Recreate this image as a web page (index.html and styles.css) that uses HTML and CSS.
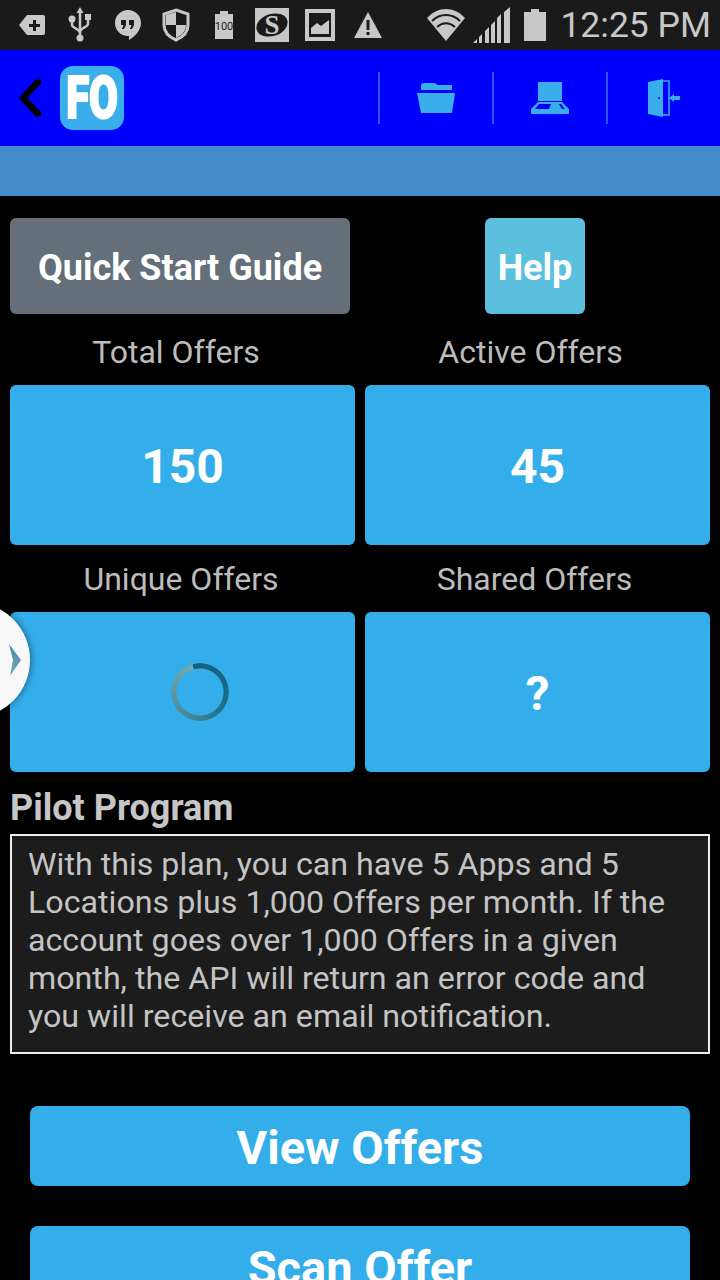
FILE: index.html
```html
<!DOCTYPE html>
<html lang="en">
<head>
    <meta charset="UTF-8">
    <title>Offers Dashboard</title>
    <link rel="stylesheet" href="styles.css">
</head>
<body>

<div class="status-bar">
    <div class="status-icons">
        <div class="slot"><svg width="26" height="22" viewBox="0 0 26 22"><path d="M8 1h16a2 2 0 0 1 2 2v16a2 2 0 0 1-2 2H8L0 11z" fill="#c8c8c8"/><path d="M10 10h4V6h3v4h4v3h-4v4h-3v-4h-4z" fill="#1a1a1a"/></svg></div>
        <div class="slot"><svg width="24" height="36" viewBox="0 0 24 36"><g fill="none" stroke="#c8c8c8" stroke-width="2.500"><path d="M12 4v26"/><path d="M4 13v5c0 3 8 4 8 8"/><path d="M20 11v6c0 3-8 4-8 8"/></g><path d="M12 0l3.500 6h-7z" fill="#c8c8c8"/><circle cx="4" cy="12" r="3.500" fill="#c8c8c8"/><rect x="17" y="7" width="6" height="6" fill="#c8c8c8"/><circle cx="12" cy="31" r="3.500" fill="#c8c8c8"/></svg></div>
        <div class="slot"><svg width="28" height="32" viewBox="0 0 28 32"><path d="M14 1a13 13 0 0 1 13 13c0 8-7 14-12 17v-4h-1A13 13 0 0 1 14 1z" fill="#c8c8c8"/><path d="M7 11h5v5l-2 4H8l1.500-4H7zM15 11h5v5l-2 4h-2l1.500-4H15z" fill="#1a1a1a"/></svg></div>
        <div class="slot"><svg width="28" height="34" viewBox="0 0 28 34"><path d="M14 2l12 4v11c0 7-5 12-12 15C7 29 2 24 2 17V6z" fill="none" stroke="#c8c8c8" stroke-width="3"/><path d="M14 4v13H4V7zM14 17h10c0 6-4 10-10 13z" fill="#c8c8c8"/></svg></div>
        <div class="slot"><svg width="18" height="28" viewBox="0 0 18 28"><path d="M0 3h5V0h8v3h5v25H0z" fill="#c8c8c8"/><text x="9" y="19" class="tiny">100</text></svg></div>
        <div class="slot"><svg width="34" height="34" viewBox="0 0 34 34"><rect width="34" height="34" fill="#c8c8c8"/><ellipse cx="17" cy="17" rx="16" ry="11" transform="rotate(-18 17 17)" fill="#1a1a1a"/><text x="17" y="26" class="s-mark">S</text></svg></div>
        <div class="slot"><svg width="30" height="32" viewBox="0 0 30 32"><rect x="2" y="2" width="26" height="28" fill="#1a1a1a" stroke="#c8c8c8" stroke-width="4"/><path d="M6 25v-6l6-5 4 3 8-6v14z" fill="#c8c8c8"/></svg></div>
        <div class="slot"><svg width="30" height="26" viewBox="0 0 30 26"><path d="M15 0l14 26H1z" fill="#c8c8c8"/><path d="M13.500 8h3v10h-3zM13.500 20h3v3h-3z" fill="#1a1a1a"/></svg></div>
    </div>
    <div class="status-right">
        <svg class="wifi" width="38" height="32" viewBox="0 0 38 32"><path d="M19 32L0 9c11-12 27-12 38 0z" fill="#c8c8c8"/><g fill="none" stroke="#1a1a1a" stroke-width="2"><path d="M5 12c8-8 20-8 28 0"/><path d="M10 18c6-5 12-5 18 0"/></g></svg>
        <svg class="signal" width="38" height="36" viewBox="0 0 38 36"><path d="M0 36l4-4v4zM6 30l3-3v9H6zM12 24l4-4v16h-4zM18 18l4-4v22h-4zM24 11l4-4v29h-4zM31 5l6-5v36h-6z" fill="#c8c8c8"/></svg>
        <svg class="batt" width="22" height="32" viewBox="0 0 22 32"><path d="M0 3h7V0h8v3h7v29H0z" fill="#c8c8c8"/></svg>
        <span class="clock">12:25 PM</span>
    </div>
</div>

<header class="app-bar">
    <div class="brand">
        <svg width="24" height="38" viewBox="0 0 24 38"><path d="M20 3L5 19l15 16" fill="none" stroke="#000" stroke-width="6.500" stroke-linecap="round" stroke-linejoin="round"/></svg>
        <div class="logo"><span class="logo-text">FO</span></div>
    </div>
    <nav class="actions">
        <div class="action">
            <svg width="38" height="30" viewBox="0 0 38 30"><path d="M4 3c0-2 1-3 3-3h10c2 0 3 1 3 2h15v5H4zM0 10h38l-3 20H4z" fill="#3aaeea"/></svg>
        </div>
        <div class="action">
            <svg width="38" height="32" viewBox="0 0 38 32"><rect x="7" y="0" width="24" height="19" fill="#3aaeea"/><path d="M7 20h24l7 7v5H0v-5zM4 27h30l-4-5H8z" fill="#3aaeea" fill-rule="evenodd"/><path d="M20 22h8l3 5H18z" fill="#3aaeea"/></svg>
        </div>
        <div class="action">
            <svg width="32" height="38" viewBox="0 0 32 38"><path d="M0 3l15-3v38L0 35z" fill="#3aaeea"/><circle cx="11" cy="19" r="1" fill="#0000ff"/><path d="M15 2h6v34h-6" fill="none" stroke="#3aaeea" stroke-width="1.500"/><path d="M21 19l5-4v2h6v4h-6v2z" fill="#3aaeea"/></svg>
        </div>
    </nav>
</header>
<div class="sub-bar"></div>

<main class="content">
    <div class="top-buttons">
        <div class="guide-wrap"><a class="btn-guide">Quick Start Guide</a></div>
        <div class="help-wrap"><a class="btn-help">Help</a></div>
    </div>

    <div class="stats">
        <div class="stat">
            <div class="stat-label shift-total">Total Offers</div>
            <div class="stat-box">150</div>
        </div>
        <div class="stat">
            <div class="stat-label shift-active">Active Offers</div>
            <div class="stat-box">45</div>
        </div>
        <div class="stat">
            <div class="stat-label shift-unique">Unique Offers</div>
            <div class="stat-box">
                <div class="spinner"></div>
            </div>
        </div>
        <div class="stat">
            <div class="stat-label shift-shared">Shared Offers</div>
            <div class="stat-box">?</div>
        </div>
    </div>

    <h2 class="plan-title">Pilot Program</h2>
    <div class="plan-box">With this plan, you can have 5 Apps and 5 Locations plus 1,000 Offers per month. If the account goes over 1,000 Offers in a given month, the API will return an error code and you will receive an email notification.</div>

    <div class="big-buttons">
        <a class="btn-big">View Offers</a>
        <a class="btn-big">Scan Offer</a>
    </div>
</main>

<div class="side-tab">
    <svg width="13" height="32" viewBox="0 0 13 32">
        <defs>
            <linearGradient id="chev" x1="0" y1="0" x2="0" y2="1">
                <stop offset="0" stop-color="#3f8aa6"/>
                <stop offset="1" stop-color="#79a9bb"/>
            </linearGradient>
        </defs>
        <path d="M0 0l12 16L1 32l3-16z" fill="url(#chev)"/>
    </svg>
</div>

</body>
</html>
```

FILE: styles.css
```css
html, body {
    margin: 0;
    height: 1280px;
    overflow: hidden;
}

body {
    font-family: Roboto, "Liberation Sans", sans-serif;
    background-color: #000;
    position: relative;
}

.status-bar {
    height: 50px;
    background-color: #1a1a1a;
    display: flex;
    justify-content: space-between;
    align-items: center;
    padding: 0 9px 0 8px;
    box-sizing: border-box;
}

.status-icons {
    display: flex;
    align-items: center;
}

.slot {
    width: 48px;
    display: flex;
    align-items: center;
    justify-content: center;
}

.tiny {
    font-size: 11px;
    font-family: Roboto, sans-serif;
    text-anchor: middle;
    fill: #1a1a1a;
}

.s-mark {
    font-size: 27px;
    font-weight: 700;
    font-family: "Liberation Serif", serif;
    text-anchor: middle;
    fill: #c8c8c8;
}

.status-right {
    display: flex;
    align-items: center;
}

.signal {
    margin-left: 8px;
}

.batt {
    margin-left: 13px;
}

.clock {
    font-size: 35.500px;
    color: #c8c8c8;
    margin-left: 14px;
}

.app-bar {
    height: 96px;
    background-color: #0000ff;
    display: flex;
    justify-content: space-between;
    align-items: center;
    padding: 0 0 0 18px;
}

.brand {
    display: flex;
    align-items: center;
    gap: 18px;
}

.logo {
    width: 64px;
    height: 64px;
    border-radius: 13px;
    background-color: #3aaeea;
    display: flex;
    align-items: center;
    justify-content: center;
}

.logo-text {
    display: block;
    color: #fff;
    font-size: 60px;
    font-weight: 900;
    line-height: 64px;
    -webkit-text-stroke: 2px #fff;
    transform: scaleX(0.7);
}

.actions {
    display: flex;
    align-items: center;
}

.action {
    width: 112px;
    height: 52px;
    border-left: 2px solid #2f55f5;
    display: flex;
    align-items: center;
    justify-content: center;
}

.sub-bar {
    height: 50px;
    background-color: #428bca;
}

.content {
    padding: 22px 10px 0;
}

.top-buttons {
    display: flex;
}

.guide-wrap {
    width: 340px;
}

.help-wrap {
    flex: 1;
    display: flex;
    justify-content: center;
    padding-left: 10px;
}

.btn-guide, .btn-help {
    display: block;
    height: 96px;
    line-height: 100px;
    border-radius: 6px;
    color: #fff;
    font-size: 36px;
    font-weight: 700;
    text-align: center;
}

.btn-guide {
    background-color: #646f7a;
}

.btn-help {
    width: 100px;
    background-color: #5bc0de;
}

.stats {
    display: grid;
    grid-template-columns: 1fr 1fr;
    column-gap: 10px;
    row-gap: 15px;
    margin-top: 19px;
}

.stat-label {
    font-size: 32px;
    line-height: 39px;
    height: 52px;
    color: #bcbcbc;
    text-align: center;
}

.shift-total {
    padding-right: 13px;
}

.shift-active {
    padding-right: 14px;
}

.shift-unique {
    padding-right: 3px;
}

.shift-shared {
    padding-right: 6px;
}

.stat-box {
    height: 160px;
    box-sizing: border-box;
    padding-top: 2px;
    background-color: #33aeea;
    border-radius: 6px;
    color: #fff;
    font-size: 48px;
    font-weight: 700;
    display: flex;
    align-items: center;
    justify-content: center;
}

.spinner {
    width: 58px;
    height: 58px;
    box-sizing: border-box;
    margin-left: 35px;
    margin-top: -2px;
    border-radius: 50%;
    background: conic-gradient(from -15deg, #135f7f 0deg, #1a6a89 120deg, #458799 220deg, #74a4ad 345deg);
    -webkit-mask: radial-gradient(circle, transparent 23px, #000 24px);
    mask: radial-gradient(circle, transparent 23px, #000 24px);
}

.plan-title {
    margin: 16px 0 0;
    font-size: 36px;
    line-height: 40px;
    font-weight: 700;
    color: #c6c6c6;
}

.plan-box {
    margin-top: 6px;
    height: 220px;
    box-sizing: border-box;
    border: 2px solid #eee;
    background-color: #1c1c1c;
    color: #c4c4c4;
    font-size: 32.200px;
    line-height: 38px;
    padding: 9px 16px;
}

.big-buttons {
    display: flex;
    flex-direction: column;
    gap: 40px;
    margin-top: 52px;
    padding: 0 20px;
}

.btn-big {
    display: block;
    height: 80px;
    line-height: 84px;
    border-radius: 8px;
    background-color: #33aeea;
    color: #fff;
    font-size: 47px;
    font-weight: 700;
    text-align: center;
}

.side-tab {
    position: absolute;
    left: -86px;
    top: 602px;
    width: 116px;
    height: 116px;
    border-radius: 50%;
    background-color: #f8f8f8;
    box-shadow: 2px 0 6px rgba(0, 0, 0, 0.35);
    display: flex;
    align-items: center;
    justify-content: flex-end;
    padding-right: 8px;
    box-sizing: border-box;
}
```
